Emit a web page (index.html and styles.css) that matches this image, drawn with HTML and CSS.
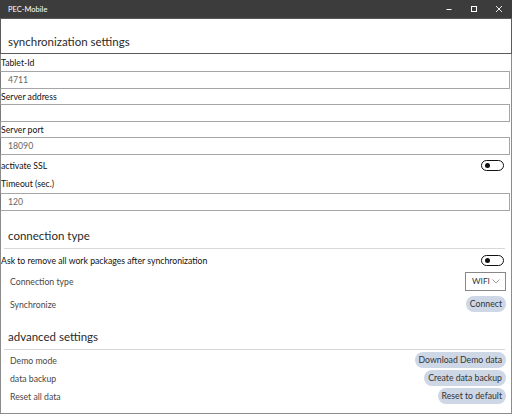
FILE: index.html
```html
<!DOCTYPE html>
<html>
<head>
<meta charset="utf-8">
<link rel="stylesheet" href="styles.css">
</head>
<body>
<div class="window">
  <div class="titlebar">
    <span class="title">PEC-Mobile</span>
    <div class="controls">
      <span class="ctl"><svg width="8" height="8" viewBox="0 0 8 8"><line x1="1.5" y1="4.5" x2="6.5" y2="4.5" stroke="#fff" stroke-width="1"/></svg></span>
      <span class="ctl"><svg width="8" height="8" viewBox="0 0 8 8"><rect x="1.5" y="1.5" width="5" height="5" fill="none" stroke="#fff" stroke-width="1"/></svg></span>
      <span class="ctl"><svg width="8" height="8" viewBox="0 0 8 8"><path d="M1 1 L7 7 M7 1 L1 7" stroke="#fff" stroke-width="0.9"/></svg></span>
    </div>
  </div>
  <div class="page">
    <div class="header-box">synchronization settings</div>
    <div class="label first">Tablet-Id</div>
    <div class="input">4711</div>
    <div class="label">Server address</div>
    <div class="input"></div>
    <div class="label">Server port</div>
    <div class="input">18090</div>
    <div class="row-plain ssl">
      <span>activate SSL</span>
      <span class="toggle"><span class="knob"></span></span>
    </div>
    <div class="label tight">Timeout (sec.)</div>
    <div class="input">120</div>

    <div class="section-title">connection type</div>
    <div class="row-plain ask">
      <span>Ask to remove all work packages after synchronization</span>
      <span class="toggle"><span class="knob"></span></span>
    </div>
    <div class="row sel">
      <span>Connection type</span>
      <span class="dropdown"><span>WIFI</span><svg width="8" height="5" viewBox="0 0 8 5"><path d="M0.5 0.5 L4 4 L7.5 0.5" fill="none" stroke="#888" stroke-width="0.8"/></svg></span>
    </div>
    <div class="row sync">
      <span>Synchronize</span>
      <span class="btn">Connect</span>
    </div>

    <div class="section-title adv">advanced settings</div>
    <div class="row b first-b">
      <span>Demo mode</span>
      <span class="btn">Download Demo data</span>
    </div>
    <div class="row b">
      <span>data backup</span>
      <span class="btn">Create data backup</span>
    </div>
    <div class="row b">
      <span>Reset all data</span>
      <span class="btn">Reset to default</span>
    </div>
  </div>
</div>
</body>
</html>
```
FILE: styles.css
```css
* { box-sizing: border-box; }
html, body { margin: 0; padding: 0; background: #fff; }
body {
  width: 512px;
  height: 414px;
  overflow: hidden;
  font-family: "Lato", "Open Sans", sans-serif;
  font-size: 8.7px;
  color: #111;
}
.window {
  width: 512px;
  height: 414px;
  border-left: 1px solid #8c8c8c;
  border-right: 1px solid #8c8c8c;
  border-bottom: 1px solid #8c8c8c;
  display: flex;
  flex-direction: column;
}
.titlebar {
  height: 18px;
  background: #3c3c3c;
  color: #fff;
  display: flex;
  align-items: center;
  justify-content: space-between;
  margin: 0 -1px;
  padding-left: 8px;
  padding-right: 1px;
}
.title { font-size: 7.5px; }
.controls { display: flex; height: 100%; }
.ctl {
  width: 25px;
  height: 18px;
  display: flex;
  align-items: center;
  justify-content: center;
}
.page { flex: 1; display: flex; flex-direction: column; }
.header-box {
  height: 36px;
  border: 1px solid #5a5a5a;
  margin-left: -1px;
  margin-right: -1px;
  display: flex;
  align-items: flex-end;
  padding: 0 0 5px 7px;
  font-size: 11.5px;
  color: #2a2a2a;
}
.label {
  height: 15px;
  line-height: 15px;
}
.label.first { height: 17px; line-height: 17px; }
.input {
  height: 18px;
  border: 1px solid #a6a6a6;
  border-left-color: #7a7a7a;
  margin-left: -1px;
  margin-right: 1px;
  padding-left: 7px;
  line-height: 16px;
  color: #666;
}
.row-plain {
  display: flex;
  align-items: center;
  justify-content: space-between;
  height: 20px;
  padding-right: 7px;
}
.label.tight { height: 18px; line-height: 18px; }
.toggle {
  width: 23px;
  height: 11px;
  border: 1px solid #111;
  border-radius: 6px;
  position: relative;
  display: inline-block;
}
.knob {
  position: absolute;
  left: 3px;
  top: 2px;
  width: 5px;
  height: 5px;
  border-radius: 50%;
  background: #111;
}
.section-title {
  margin: 17px 6px 0 3px;
  padding: 0 0 4px 4px;
  font-size: 11.5px;
  line-height: 16px;
  color: #2a2a2a;
  border-bottom: 1px solid #d8d8d8;
}
.section-title.adv { margin-top: 14px; }
.ask { height: 23px; }
.row {
  display: flex;
  align-items: center;
  justify-content: space-between;
  padding: 0 5px 0 9px;
  color: #484848;
  height: 22px;
}
.row.sel { height: 18px; }
.row.sync { height: 22px; margin-top: 3px; }
.row.b { height: 18px; }
.row.first-b { margin-top: 1px; }
.dropdown {
  height: 19px;
  width: 41px;
  border: 1px solid #888;
  display: inline-flex;
  align-items: center;
  justify-content: space-between;
  padding: 0 5px 0 6px;
  color: #333;
  font-size: 8.3px;
}
.btn {
  background: #cdd7e6;
  border-radius: 8px;
  height: 16px;
  line-height: 16px;
  padding: 0 4px;
  color: #333;
}
```
